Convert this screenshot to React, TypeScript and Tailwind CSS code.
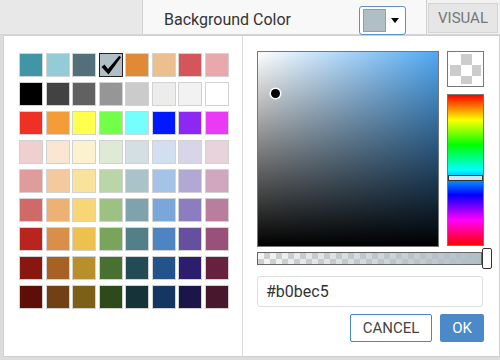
const rows: string[][] = [
  ['#4095a6', '#93cbd6', '#546e7a', '#b0bec5', '#e08a35', '#ecc08e', '#d4555a', '#e8a8ac'],
  ['#000000', '#424242', '#616161', '#969696', '#cbcbcb', '#ececec', '#f2f2f2', '#ffffff'],
  ['#ee3124', '#f39c38', '#ffff4d', '#73ff47', '#74fffc', '#0019ff', '#8d28f3', '#eb3af5'],
  ['#efcfcf', '#fae6d3', '#fdf2d0', '#deead6', '#d3dfe3', '#d2dff0', '#d8d5e8', '#e8d2db'],
  ['#df9c9b', '#f4c99d', '#f9e29c', '#bad6a8', '#a9c3c8', '#a5c3e6', '#b2a8d4', '#d1a7bf'],
  ['#d06a68', '#ecb173', '#f9d674', '#9cc183', '#7ea3ad', '#7ba6da', '#8b7dbf', '#b97d9d'],
  ['#b9251e', '#d98f49', '#eec04e', '#79a55a', '#537f89', '#4e84c2', '#674f9f', '#99507a'],
  ['#881710', '#a76123', '#b98f2c', '#487131', '#234b56', '#23528d', '#2d1e6d', '#67213f'],
  ['#5d0e07', '#714015', '#7c6017', '#2d4a1a', '#17333a', '#153660', '#1c154a', '#48162d'],
];

const selected = '#b0bec5';

function Swatch({ color }: { color: string }) {
  const active = color === selected;
  return (
    <button
      className={`w-[24px] h-[24px] flex items-center justify-center border ${
        active ? 'border-[#222]' : 'border-[#d2d2d2]'
      }`}
      style={{ backgroundColor: color }}
    >
      {active && (
        <svg width="22" height="22" viewBox="0 0 22 22">
          <path d="M1.5 13 L4.5 10.5 L8 15 L19.3 1.8 L21 3.3 L8.5 20.5 Z" fill="#000" />
        </svg>
      )}
    </button>
  );
}

export default function App() {
  return (
    <div className="w-[500px] h-[360px] overflow-hidden bg-[#dcdcdc] font-['Roboto',sans-serif]">
      {/* top toolbar */}
      <div className="flex h-[35px] border-b border-[#d6d6d6]">
        <div className="w-[143px] bg-[#e8e8e8] border-r border-[#d2d2d2]" />
        <div className="w-[283px] bg-[#f8f8f8] flex items-center pl-[21px] pr-[20px]">
          <span className="text-[16px] text-[#333] flex-1 mt-[5px]">Background Color</span>
          <button className="w-[47px] h-[29px] mt-[6px] border border-[#5b93c9] rounded-[3px] bg-white flex items-center pl-[3px] gap-[5px]">
            <span className="w-[23px] h-[23px] bg-[#b0bec5] border border-[#9c9c9c]" />
            <span className="w-0 h-0 border-l-[4px] border-r-[4px] border-t-[5px] border-l-transparent border-r-transparent border-t-black" />
          </button>
        </div>
        <div className="flex-1 bg-[#f2f2f2] border-l border-[#d0d0d0] pl-[1px] pt-[3px]">
          <div className="w-[70px] h-[30px] bg-[#e6e6e6] border border-[#d4d4d4] flex items-center justify-center text-[15px] text-[#777]">
            VISUAL
          </div>
        </div>
      </div>

      {/* color picker popup */}
      <div className="ml-[3px] w-[497px] h-[322px] bg-white border border-[#cfcfcf] flex">
        <div className="w-[239px] border-r border-[#dcdcdc] pl-[15px] pt-[17px]">
          <div className="grid grid-cols-[repeat(8,24px)] gap-x-[2.5px] gap-y-[5px]">
            {rows.flat().map((c, i) => (
              <Swatch key={i} color={c} />
            ))}
          </div>
        </div>

        <div className="flex-1 pl-[14px] pt-[15px] flex flex-col">
          <div className="flex gap-[8px]">
            {/* saturation / value */}
            <div className="relative w-[182px] h-[196px] border border-[#777] bg-[linear-gradient(to_right,#ffffff,#50a8f2)]">
              <div className="absolute inset-0 bg-linear-to-b from-transparent to-black" />
              <div className="absolute left-[13px] top-[37px] w-[9px] h-[9px] rounded-full bg-black ring-[1.5px] ring-white" />
            </div>
            <div className="w-[37px] flex flex-col gap-[7px]">
              <div className="h-[36px] border border-[#777] p-[2px]">
                <div className="w-full h-full bg-[conic-gradient(#cccccc_25%,#ffffff_0_50%,#cccccc_0_75%,#ffffff_0)] bg-[length:22px_22px]" />
              </div>
              <div className="relative h-[152px] border border-[#777] bg-[linear-gradient(to_bottom,#f00,#ff0,#0f0,#0ff,#00f,#f0f,#f00)]">
                <div className="absolute left-0 right-0 top-[80px] h-[6px] border border-[#333] bg-[#cfe8f7]" />
              </div>
            </div>
          </div>

          {/* alpha slider */}
          <div className="relative mt-[5px] w-[225px] h-[13px] border border-[#666] bg-[conic-gradient(#cfcfcf_25%,#f4f4f4_0_50%,#cfcfcf_0_75%,#f4f4f4_0)] bg-[length:12px_12px]">
            <div className="absolute inset-0 bg-linear-to-r from-transparent to-[#b0bec5]" />
            <div className="absolute left-[224px] top-[-5px] w-[10px] h-[21px] bg-white border border-[#333] rounded-[2px]" />
          </div>

          {/* hex input */}
          <input
            className="mt-[11px] w-[226px] h-[31px] border border-[#dedede] rounded-[3px] pl-[8px] text-[16px] text-[#333] outline-none font-['Roboto',sans-serif]"
            defaultValue="#b0bec5"
          />

          <div className="mt-[7px] w-[227px] flex justify-end gap-[8px]">
            <button className="w-[82px] h-[28px] border border-[#4a87c5] rounded-[2px] bg-white text-[15px] text-[#444]">
              CANCEL
            </button>
            <button className="w-[44px] h-[28px] rounded-[2px] bg-[#4b89c8] text-[15px] text-white">
              OK
            </button>
          </div>
        </div>
      </div>
    </div>
  );
}
